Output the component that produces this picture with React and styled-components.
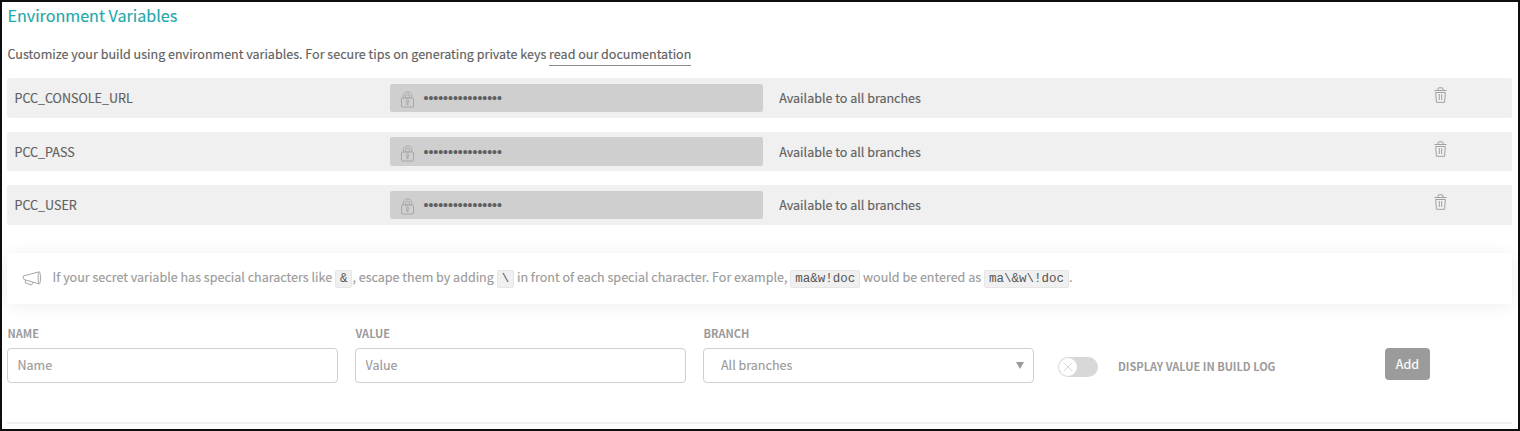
import React from "react";
import styled, { createGlobalStyle } from "styled-components";

const GlobalStyle = createGlobalStyle`
  *, *::before, *::after { box-sizing: border-box; }
  body { margin: 0; background: #fff; }
`;

const Page = styled.main`
  height: 431px;
  overflow: hidden;
  padding: 0 6px 0 5px;
  border: 2px solid #0e0e10;
  background: #fff;
  color: #606060;
  font-family: "Noto Sans CJK SC", "Open Sans", sans-serif;
  font-size: 12.54px;
  line-height: 20px;
  -webkit-text-stroke: 0.15px;
`;

const Title = styled.h2`
  margin: 2px 0 0 0.5px;
  font-size: 16.1px;
  font-weight: 400;
  line-height: 22px;
  color: #1fa8ab;
`;

const Intro = styled.p`
  margin: 18px 0 14px 0.5px;
  height: 20px;
  white-space: nowrap;
`;

const DocLink = styled.a`
  display: inline-block;
  height: 22px;
  color: inherit;
  text-decoration: none;
  border-bottom: 1px solid #8c8c8c;
`;

const VariableList = styled.div`
  display: flex;
  flex-direction: column;
  gap: 14px;
`;

const VariableRow = styled.div`
  display: grid;
  grid-template-columns: 383px 373px 1fr 79px;
  align-items: center;
  height: 39.5px;
  border-radius: 2px;
  background: #f0f0f0;
`;

const VariableName = styled.span`
  padding: 0.5px 0 0 7.5px;
`;

const SecretValue = styled.div`
  display: flex;
  align-items: center;
  align-self: start;
  height: 28.5px;
  margin-top: 5.7px;
  padding-left: 10px;
  border-radius: 2px;
  background: #cfcfcf;
`;

const LockIcon = styled.svg`
  width: 15px;
  height: 17px;
  margin-top: 4px;
  flex: none;
`;

const Dots = styled.span`
  margin-left: 8.5px;
  padding-top: 0.7px;
  font-family: "Liberation Sans", Arial, sans-serif;
  font-size: 14px;
`;

const Availability = styled.span`
  padding: 0.5px 0 0 16.3px;
`;

const DeleteButton = styled.button`
  display: flex;
  width: 15px;
  height: 18px;
  margin: 0 0 4.8px;
  padding: 0;
  border: 0;
  background: none;
`;

const Notice = styled.aside`
  display: flex;
  align-items: center;
  height: 51px;
  margin-top: 28.5px;
  padding-left: 15px;
  background: #fff;
  box-shadow: 0 2px 18px rgba(0, 0, 0, 0.07);
  color: #9b9b9b;
  white-space: nowrap;
`;

const NoticeText = styled.p`
  margin: 0 0 2px 10.6px;
`;

const Code = styled.code`
  display: inline-block;
  height: 18px;
  padding: 0 4px;
  border: 1px solid #e6e6e6;
  border-radius: 2px;
  background: #f0f0f0;
  color: #555;
  font-family: "Liberation Mono", monospace;
  font-size: 12.5px;
  line-height: 16px;
  -webkit-text-stroke: 0;
`;

const Form = styled.form`
  display: flex;
  align-items: flex-start;
  margin-top: 20px;
  height: 98px;
  color: #9b9b9b;
`;

const Field = styled.label`
  display: flex;
  flex-direction: column;
  width: 331px;
  margin-right: 17px;
`;

const Caption = styled.span`
  padding-left: 0.5px;
  font-size: 11px;
  font-weight: 700;
  height: 24px;
  line-height: 18px;
  white-space: nowrap;
  -webkit-text-stroke: 0;
`;

const ToggleLabel = styled(Caption)`
  height: 20px;
  padding-left: 1px;
  line-height: 18px;
`;

const Input = styled.input`
  height: 35px;
  padding: 0 10px 2px 9.5px;
  border: 1px solid #cfcfcf;
  border-radius: 4px;
  background: #fff;
  font: inherit;
  outline: 0;
  &::placeholder { color: #9b9b9b; opacity: 1; }
`;

const Select = styled.div`
  display: flex;
  align-items: center;
  justify-content: space-between;
  height: 35px;
  padding: 0 9px 1px 17px;
  border: 1px solid #cfcfcf;
  border-radius: 4px;
`;

const Arrow = styled.span`
  border: 4px solid transparent;
  border-top: 7px solid #9b9b9b;
  border-bottom: 0;
`;

const ToggleGroup = styled.div`
  display: flex;
  align-items: center;
  width: 327px;
  margin: 33px 0 0 7px;
`;

const Toggle = styled.span`
  display: flex;
  width: 40px;
  height: 20px;
  margin-right: 19px;
  padding: 1px;
  border-radius: 10px;
  background: #d8d8d8;
`;

const Knob = styled.span`
  display: grid;
  place-items: center;
  width: 18px;
  height: 18px;
  border-radius: 50%;
  background: #fff;
`;

const AddButton = styled.button`
  width: 45px;
  height: 32px;
  margin-top: 24px;
  padding: 0;
  border: 0;
  border-radius: 4px;
  background: #9b9b9b;
  color: #fff;
  font: inherit;
  font-size: 12.6px;
`;

const Divider = styled.hr`
  height: 2px;
  margin: 0;
  border: 0;
  background: #f0f0f0;
`;

const Lock = () => (
  <LockIcon viewBox="0 0 15 17" fill="none" stroke="#a6a6a6">
    <path d="M3.200 7V5.200a4.300 4.300 0 0 1 8.600 0V7M5.500 7V5.300a2 2 0 0 1 4 0V7z" />
    <rect x="1.5" y="7" width="12" height="9" rx="1" />
    <circle cx="7.5" cy="10.3" r="1.2" />
    <path d="M7 11.5v2.2h1v-2.2" />
  </LockIcon>
);

const Trash = () => (
  <svg width="15" height="18" viewBox="0 0 15 18" fill="none" stroke="#a0a0a0">
    <path d="M1.500 4.500h12M5 4V2.800q0-1 1-1h3q1 0 1 1V4M2.700 6.500l.7 9.800h8.200l.7-9.800zM6.300 8v6M8.700 8v6" />
  </svg>
);

const Megaphone = () => (
  <svg width="20" height="16" viewBox="0 0 20 16" fill="none" stroke="#9b9b9b" strokeWidth="0.9" strokeLinejoin="round">
    <path d="M17 .9 1.500 4.900Q.7 7 2 8.500L17 12.900M3.500 9.200l-.2 2.600 6.200 2.200 1.500-2.700" />
    <ellipse cx="17.300" cy="6.900" rx="1.200" ry="6" />
  </svg>
);

const names = ["PCC_CONSOLE_URL", "PCC_PASS", "PCC_USER"];

export default function App() {
  return (
    <Page>
      <GlobalStyle />
      <Title>Environment Variables</Title>
      <Intro>
        Customize your build using environment variables. For secure tips on generating private keys{" "}
        <DocLink>read our documentation</DocLink>
      </Intro>
      <VariableList>
        {names.map((name) => (
          <VariableRow key={name}>
            <VariableName>{name}</VariableName>
            <SecretValue>
              <Lock />
              <Dots>{"•".repeat(16)}</Dots>
            </SecretValue>
            <Availability>Available to all branches</Availability>
            <DeleteButton type="button" aria-label="Delete">
              <Trash />
            </DeleteButton>
          </VariableRow>
        ))}
      </VariableList>
      <Notice>
        <Megaphone />
        <NoticeText>
          If your secret variable has special characters like <Code>&amp;</Code>, escape them by adding{" "}
          <Code>\</Code> in front of each special character. For example, <Code>ma&amp;w!doc</Code> would be
          entered as <Code>ma\&amp;w\!doc</Code>.
        </NoticeText>
      </Notice>
      <Form>
        <Field>
          <Caption>NAME</Caption>
          <Input placeholder="Name" />
        </Field>
        <Field>
          <Caption>VALUE</Caption>
          <Input placeholder="Value" />
        </Field>
        <Field as="div">
          <Caption>BRANCH</Caption>
          <Select>
            All branches
            <Arrow />
          </Select>
        </Field>
        <ToggleGroup>
          <Toggle>
            <Knob>
              <svg width="10" height="10" viewBox="0 0 10 10" stroke="#d8d8d8">
                <path d="M.7.7l8.600 8.600M9.300.7.7 9.300" />
              </svg>
            </Knob>
          </Toggle>
          <ToggleLabel>DISPLAY VALUE IN BUILD LOG</ToggleLabel>
        </ToggleGroup>
        <AddButton type="button">Add</AddButton>
      </Form>
      <Divider />
    </Page>
  );
}
